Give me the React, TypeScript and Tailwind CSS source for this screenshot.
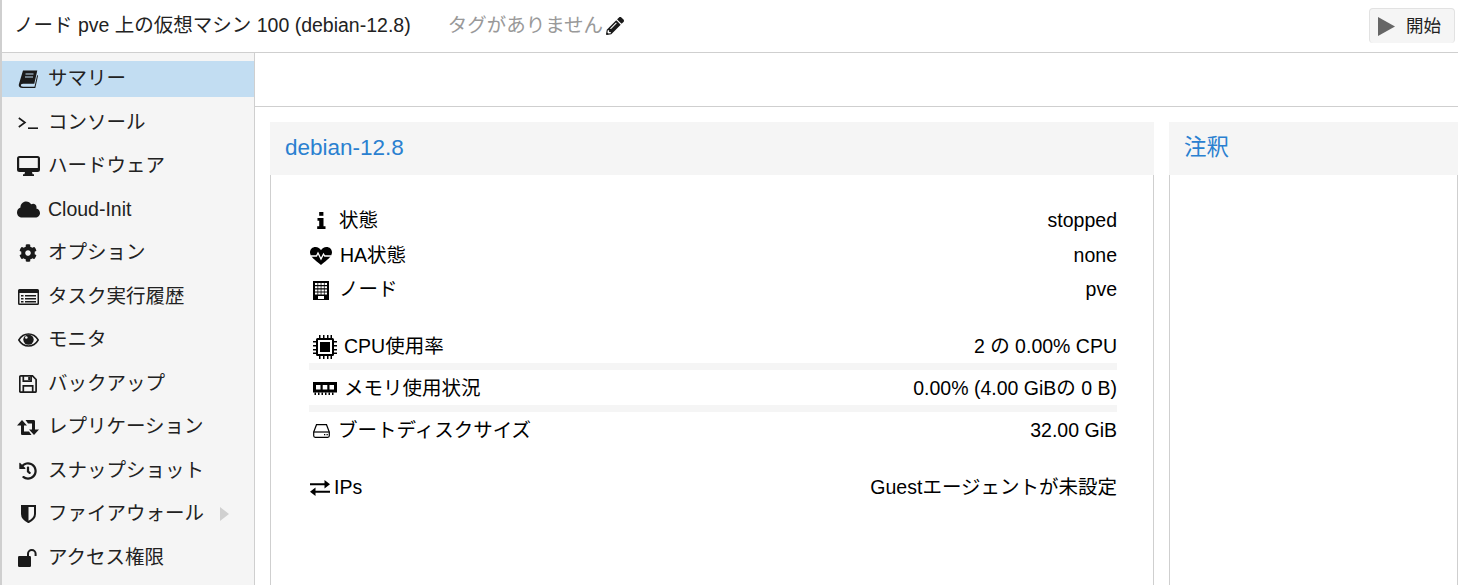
import type { ReactNode } from 'react';
import { FaCloud, FaCog, FaHistory, FaPencilAlt } from 'react-icons/fa';

const ink = '#1a1a1a';

const BookIcon = () => (
    <svg width="20" height="19" viewBox="0 0 20 19" fill={ink}>
        <path d="M5 .5h14.300l-3 13.300H5c-1.500 0-2.300.7-2.100 1.700.2.800 1 1.200 2 1.200h11.600l2.700-11.700.8.700-2.700 12.300H4.500C2 18 .4 16.800.8 14.600z" />
        <path d="M7.500 4h8M7 7h8" stroke="#c2ddf2" strokeWidth="1" />
    </svg>
);

const TerminalIcon = () => (
    <svg width="20" height="12" viewBox="0 0 20 12" fill="none" stroke={ink} strokeWidth="1.600">
        <path d="M.8 1 7 5.500.8 10" />
        <path d="M10 11.200h10" />
    </svg>
);

const DesktopIcon = () => (
    <svg width="23" height="20" viewBox="0 0 23 20" fill={ink}>
        <path fillRule="evenodd" d="M2.500 0h18A2.500 2.500 0 0 1 23 2.500v11a2.500 2.500 0 0 1-2.500 2.500h-18A2.500 2.500 0 0 1 0 13.500v-11A2.500 2.500 0 0 1 2.500 0zM2.200 2v10h18.600V2z" />
        <path d="M8 16h7l.6 2.300h1.400V20H6v-1.700h1.400z" />
    </svg>
);

const ListAltIcon = () => (
    <svg width="21" height="16" viewBox="0 0 21 16" fill={ink}>
        <path fillRule="evenodd" d="M1.500 0h18A1.500 1.500 0 0 1 21 1.500v13a1.500 1.500 0 0 1-1.500 1.500h-18A1.500 1.500 0 0 1 0 14.500v-13A1.500 1.500 0 0 1 1.500 0zM1.500 4v10.500h18V4z" />
        <path d="M3 6h2.500v1.600H3zM3 9h2.500v1.600H3zM3 12h2.500v1.600H3zM7 6h11v1.600H7zM7 9h11v1.600H7zM7 12h11v1.600H7z" />
    </svg>
);

const EyeIcon = () => (
    <svg width="21" height="14" viewBox="0 0 21 14">
        <path d="M.8 7C3 3.200 6.500 1 10.500 1s7.500 2.200 9.700 6c-2.200 3.800-5.700 6-9.700 6S3 10.800.8 7z" fill="none" stroke={ink} strokeWidth="1.500" />
        <circle cx="10.500" cy="6.600" r="5.200" fill={ink} />
        <circle cx="8.300" cy="4.500" r="1.300" fill="#f5f5f5" />
    </svg>
);

const SaveIcon = () => (
    <svg width="18" height="18" viewBox="0 0 18 18" fill="none" stroke={ink} strokeWidth="1.700">
        <path d="M1.800.9h11.700l3.600 3.600v11.700a1 1 0 0 1-1 1H1.800a1 1 0 0 1-1-1V1.900a1 1 0 0 1 1-1z" />
        <path d="M4.300 1v5.200h7.800V1M4.300 17v-6.200h9.400V17" />
        <path d="M9.200 2v3h2V2z" fill={ink} stroke="none" />
    </svg>
);

const RetweetIcon = () => (
    <svg width="22" height="15" viewBox="0 0 22 15" fill={ink}>
        <path d="M5 0l5 5.500H7v6h5l2.500 3.500h-9C4.500 15 4 14.500 4 13.500v-8H0z" />
        <path d="M17 15l-5-5.500h3v-6h-4L8.500 0h8c1 0 1.500.5 1.500 1.500v8h4z" />
    </svg>
);

const ShieldIcon = () => (
    <svg width="15" height="18" viewBox="0 0 15 18">
        <path d="M1 1h13v8c0 4-3.500 6.500-6.500 8C4.500 15.500 1 13 1 9z" fill="none" stroke={ink} strokeWidth="2" />
        <path d="M1 1h6.500v16C4.500 15.500 1 13 1 9z" fill={ink} />
    </svg>
);

const UnlockIcon = () => (
    <svg width="20" height="18" viewBox="0 0 20 18" fill={ink}>
        <rect x="0" y="7" width="13" height="11" rx="1.200" />
        <path d="M9 7V4.800a4.800 4.800 0 0 1 9.600 0V7h-2V4.800a2.800 2.800 0 0 0-5.600 0V7z" />
    </svg>
);

const InfoIcon = () => (
    <svg width="9" height="17" viewBox="0 0 9 17" fill="#000">
        <rect x="2.200" y="0" width="4.200" height="3.800" />
        <path d="M.5 6h6v8.300h2V17H.2v-2.700h2V8.700H.5z" />
    </svg>
);

const HeartbeatIcon = () => (
    <svg width="22" height="18" viewBox="0 0 22 18">
        <path d="M11 18C7 14.500 0 10 0 5.500 0 2.200 2.400 0 5.500 0 8 0 10 1.400 11 3.200 12 1.400 14 0 16.500 0 19.600 0 22 2.200 22 5.500 22 10 15 14.500 11 18z" fill="#000" />
        <path d="M1 9h5.500l1.500-3 3 6 2.500-5 1.200 2H21" fill="none" stroke="#fff" strokeWidth="1.300" />
    </svg>
);

const BuildingIcon = () => (
    <svg width="16" height="19" viewBox="0 0 16 19" fill="#fff">
        <rect width="16" height="19" fill="#000" />
        <path d="M2 2h2.500v2H2zM5.200 2h2.500v2H5.200zM8.400 2h2.500v2H8.400zM11.600 2h2.400v2h-2.400zM2 5.200h2.500v2H2zM5.200 5.200h2.500v2H5.200zM8.400 5.200h2.500v2H8.400zM11.600 5.200h2.400v2h-2.400zM2 8.400h2.500v2H2zM5.200 8.400h2.500v2H5.200zM8.400 8.400h2.500v2H8.400zM11.600 8.400h2.400v2h-2.400zM2 11.600h2.500v2H2zM5.200 11.600h2.500v2H5.200zM8.400 11.600h2.500v2H8.400zM11.600 11.600h2.400v2h-2.400z" />
        <path d="M5 15h6v3H5z" />
    </svg>
);

const ChipIcon = () => (
    <svg width="24" height="24" viewBox="0 0 24 24" fill="#000">
        <path fillRule="evenodd" d="M4.500 3h15A1.500 1.500 0 0 1 21 4.500v15a1.500 1.500 0 0 1-1.500 1.500h-15A1.500 1.500 0 0 1 3 19.500v-15A1.500 1.500 0 0 1 4.500 3zM5 5v14h14V5z" />
        <rect x="7" y="7" width="10" height="10" />
        <path d="M6 0h1.500v3H6zM10 0h1.500v3H10zM14 0h1.500v3H14zM17.500 0H19v3h-1.500zM6 21h1.500v3H6zM10 21h1.500v3H10zM14 21h1.500v3H14zM17.500 21H19v3h-1.500zM0 6h3v1.500H0zM0 10h3v1.500H0zM0 14h3v1.500H0zM0 17.500h3V19H0zM21 6h3v1.500h-3zM21 10h3v1.500h-3zM21 14h3v1.500h-3zM21 17.500h3V19h-3z" />
    </svg>
);

const MemoryIcon = () => (
    <svg width="24" height="13" viewBox="0 0 24 13" fill="#000">
        <path fillRule="evenodd" d="M0 0h24v10.500H0zM3 3v4.500h4.500V3zM9.700 3v4.500h4.600V3zM16.500 3v4.500H21V3z" />
        <path d="M1.500 10.500h1.500V13H1.500zM5 10.500h1.500V13H5zM8.500 10.500H10V13H8.500zM12 10.500h1.500V13H12zM15.500 10.500H17V13h-1.500zM19 10.500h1.500V13H19z" />
    </svg>
);

const HddIcon = () => (
    <svg width="17" height="14" viewBox="0 0 17 14" fill="none" stroke="#000" strokeWidth="1.200">
        <path d="M.7 8 3.500.7h10L16.300 8v3.800a1.500 1.500 0 0 1-1.500 1.500H2.200A1.500 1.500 0 0 1 .7 11.800z" />
        <path d="M.7 8h15.600" />
        <path d="M11 10.700h1.300M13.500 10.700h1.300" strokeWidth="1.300" />
    </svg>
);

const ExchangeIcon = () => (
    <svg width="20" height="16" viewBox="0 0 20 16" fill="#000">
        <path d="M0 3.200h14.500V0L20 4.300l-5.500 4.200V5.300H0zM20 10.700H5.500V7.500L0 11.700 5.500 16v-3.200H20z" />
    </svg>
);

const PlayIcon = () => (
    <svg width="17" height="19" viewBox="0 0 17 19" fill="#666">
        <path d="M0 0 17 9.500 0 19z" />
    </svg>
);

interface NavItem {
    label: string;
    icon: ReactNode;
    active?: boolean;
    arrow?: boolean;
}

const navItems: NavItem[] = [
    { label: 'サマリー', icon: <BookIcon />, active: true },
    { label: 'コンソール', icon: <TerminalIcon /> },
    { label: 'ハードウェア', icon: <DesktopIcon /> },
    { label: 'Cloud-Init', icon: <FaCloud size={23} /> },
    { label: 'オプション', icon: <FaCog size={18} /> },
    { label: 'タスク実行履歴', icon: <ListAltIcon /> },
    { label: 'モニタ', icon: <EyeIcon /> },
    { label: 'バックアップ', icon: <SaveIcon /> },
    { label: 'レプリケーション', icon: <RetweetIcon /> },
    { label: 'スナップショット', icon: <FaHistory size={18} /> },
    { label: 'ファイアウォール', icon: <ShieldIcon />, arrow: true },
    { label: 'アクセス権限', icon: <UnlockIcon /> },
];

function SidebarRow({ item }: { item: NavItem }) {
    return (
        <div className={`flex h-[36px] shrink-0 items-center pl-[14px] text-[#222] ${item.active ? 'bg-[#c2ddf2]' : ''}`}>
            <span className="flex w-[24px] justify-center text-[#1a1a1a]">{item.icon}</span>
            <span className="ml-[8px] leading-none whitespace-nowrap">{item.label}</span>
            {item.arrow && <span className="ml-[16px] h-0 w-0 border-y-[7px] border-l-[9px] border-y-transparent border-l-[#d0d0d0]" />}
        </div>
    );
}

function InfoRow({ icon, label, value, iconBox, height }: { icon: ReactNode; label: string; value: string; iconBox: string; height: string }) {
    return (
        <div className={`flex items-center justify-between text-black ${height}`}>
            <div className="flex items-center">
                <span className={`flex justify-center ${iconBox}`}>{icon}</span>
                <span className="whitespace-nowrap">{label}</span>
            </div>
            <span className="whitespace-nowrap">{value}</span>
        </div>
    );
}

function Panel({ title, className, children }: { title: string; className: string; children?: ReactNode }) {
    return (
        <section className={`flex flex-col ${className}`}>
            <h2 className="flex h-[53px] shrink-0 items-center bg-[#f5f5f5] pb-[2px] pl-[15px] text-[22.500px] font-normal text-[#2a80d0]">{title}</h2>
            <div className="grow border-x border-[#cfcfcf] bg-white">{children}</div>
        </section>
    );
}

export default function App() {
    return (
        <div
            className="flex h-[585px] w-[1458px] flex-col overflow-hidden border-l-2 border-[#cfcfcf] bg-white text-[19.500px]"
            style={{ fontFamily: '"Liberation Sans", "Noto Sans CJK JP", sans-serif' }}
        >
            <header className="flex h-[53px] shrink-0 items-center border-b border-[#cfcfcf] pl-[12px]">
                <span className="text-[#222] whitespace-nowrap">ノード pve 上の仮想マシン 100 (debian-12.8)</span>
                <span className="ml-[37px] text-[#999] whitespace-nowrap">タグがありません</span>
                <FaPencilAlt size={18} className="ml-[3px] text-[#1a1a1a]" />
                <button className="mt-[-1px] mr-[3px] ml-auto flex h-[35px] w-[86px] items-center rounded-[4px] border border-b-0 border-[#e2e2e2] bg-[#f5f5f5] pl-[8px] text-[17.500px] text-[#222]">
                    <PlayIcon />
                    <span className="ml-[11px]">開始</span>
                </button>
            </header>

            <div className="flex min-h-0 grow">
                <nav className="flex w-[253px] shrink-0 flex-col gap-[7.500px] border-r border-[#cfcfcf] bg-[#f5f5f5] pt-[8px]">
                    {navItems.map((item) => (
                        <SidebarRow key={item.label} item={item} />
                    ))}
                </nav>

                <main className="flex min-w-0 grow flex-col">
                    <div className="h-[54px] shrink-0 border-b border-[#cfcfcf]" />
                    <div className="flex min-h-0 grow gap-[15px] pt-[15px] pl-[15px]">
                        <Panel title="debian-12.8" className="w-[884px] shrink-0">
                            <div className="flex flex-col pt-[28px] pr-[36px] pl-[38px]">
                                <InfoRow icon={<InfoIcon />} label="状態" value="stopped" iconBox="w-[30px] pr-[6px]" height="h-[35px]" />
                                <InfoRow icon={<HeartbeatIcon />} label="HA状態" value="none" iconBox="w-[31px] pr-[7px]" height="h-[35px]" />
                                <InfoRow icon={<BuildingIcon />} label="ノード" value="pve" iconBox="w-[30px] pr-[6px]" height="h-[34px]" />
                                <div className="h-[22px]" />
                                <InfoRow icon={<ChipIcon />} label="CPU使用率" value="2 の 0.00% CPU" iconBox="w-[35px] pr-[4px]" height="h-[34px] pt-[2px]" />
                                <div className="h-[7px] bg-[#f5f5f5]" />
                                <InfoRow icon={<MemoryIcon />} label="メモリ使用状況" value="0.00% (4.00 GiBの 0 B)" iconBox="w-[35px] pr-[4px]" height="h-[35px] pt-[2px]" />
                                <div className="h-[7px] bg-[#f5f5f5]" />
                                <InfoRow icon={<HddIcon />} label="ブートディスクサイズ" value="32.00 GiB" iconBox="w-[29px] pr-[4px]" height="h-[36px] pt-[2px]" />
                                <div className="h-[21px]" />
                                <InfoRow icon={<ExchangeIcon />} label="IPs" value="Guestエージェントが未設定" iconBox="w-[25px] pr-[4px]" height="h-[36px] pt-[2px]" />
                            </div>
                        </Panel>
                        <Panel title="注釈" className="min-w-0 grow" />
                    </div>
                </main>
            </div>
        </div>
    );
}
